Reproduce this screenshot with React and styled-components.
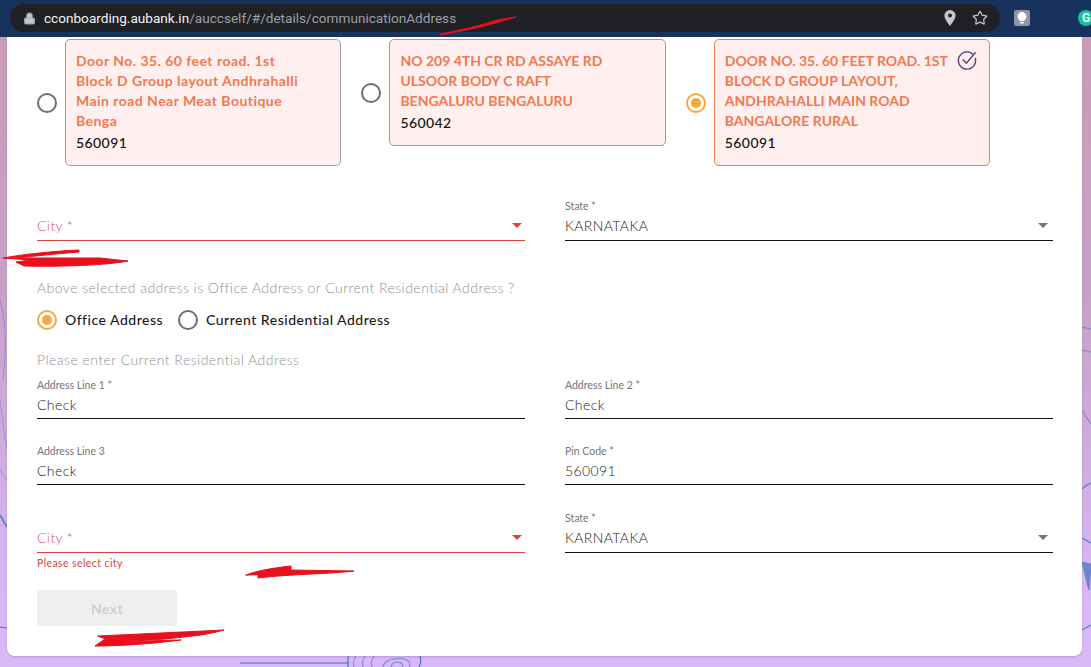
import React from "react";
import styled, { createGlobalStyle } from "styled-components";
import { Lock, Star } from "lucide-react";

const GlobalStyle = createGlobalStyle`
  html, body {
    margin: 0;
    padding: 0;
    background: #d9b8fa;
  }
  * {
    box-sizing: border-box;
  }
`;

const Screen = styled.div`
  position: relative;
  width: 1091px;
  height: 667px;
  overflow: hidden;
  display: flex;
  flex-direction: column;
  font-family: Lato, "Noto Sans", sans-serif;
  background: linear-gradient(180deg, #cc9bb6 0%, #c8a0c8 45%, #d9b8fa 92%);
`;

const BrowserBar = styled.div`
  height: 37px;
  flex-shrink: 0;
  display: flex;
  align-items: flex-start;
  padding-top: 4px;
  padding-left: 10px;
  background: #17325c;
`;

const UrlPill = styled.div`
  flex-shrink: 0;
  width: 990px;
  height: 28px;
  display: flex;
  align-items: center;
  padding: 0 10px 0 13px;
  border-radius: 14px;
  background: #202124;
  font-family: Roboto, sans-serif;
  font-size: 13.6px;
  color: #9aa0a6;
`;

const UrlHost = styled.span`
  color: #f1f3f4;
`;

const UrlText = styled.div`
  flex: 1;
  margin-left: 8px;
  white-space: nowrap;
`;

const PillIcons = styled.div`
  display: flex;
  align-items: center;
  gap: 16px;
  margin-right: 2px;
  color: #c4c7c5;
`;

const ExtensionTile = styled.div`
  flex-shrink: 0;
  width: 16px;
  height: 16px;
  margin-left: 14px;
  margin-top: 6px;
  display: flex;
  align-items: center;
  justify-content: center;
  border-radius: 2px;
  background: #8f97a5;
`;

const GrammarlyDot = styled.div`
  width: 16px;
  height: 16px;
  margin-left: 48px;
  margin-top: 6px;
  flex-shrink: 0;
  display: flex;
  align-items: center;
  justify-content: center;
  border-radius: 50%;
  background: #15c39a;
  color: #fff;
  font-family: Roboto, sans-serif;
  font-size: 12px;
  font-weight: 700;
`;

const Backdrop = styled.svg`
  position: absolute;
  left: 0;
  top: 0;
`;

const Card = styled.main`
  position: relative;
  width: 1075px;
  height: 619px;
  margin-left: 7px;
  padding: 2px 29px 30px 30px;
  background: #fff;
  border-radius: 0 0 8px 8px;
  box-shadow: 0 1px 2px rgba(90, 60, 120, 0.25);
`;

const AddressList = styled.div`
  display: flex;
  align-items: flex-start;
  gap: 20px;
`;

const AddressItem = styled.div`
  display: flex;
  align-items: center;
  gap: 8px;
`;

const Radio = styled.span`
  flex-shrink: 0;
  width: 20px;
  height: 20px;
  display: flex;
  align-items: center;
  justify-content: center;
  border-radius: 50%;
  border: 2px solid ${(p) => (p.$checked ? "#f9a63c" : "#6f6f6f")};
  &::after {
    content: "";
    width: 10px;
    height: 10px;
    border-radius: 50%;
    background: ${(p) => (p.$checked ? "#f9a63c" : "transparent")};
  }
`;

const AddressCard = styled.div`
  position: relative;
  width: 276.4px;
  padding: 11px 10px 11px 10px;
  background: #fff0ef;
  border: 1px solid ${(p) => (p.$selected ? "#e8804f" : "#a39a9c")};
  border-radius: 5px;
`;

const AddressLine = styled.div`
  font-size: 14px;
  line-height: 20px;
  font-weight: 700;
  white-space: nowrap;
  letter-spacing: ${(p) => (p.$caps ? "0" : "0.46px")};
  color: #f0794f;
`;

const Pin = styled.div`
  padding-top: 1px;
  font-size: 14px;
  line-height: 22px;
  font-weight: 500;
  letter-spacing: 0.42px;
  color: #111;
`;

const CheckMark = styled.svg`
  position: absolute;
  right: 12px;
  top: 10px;
`;

const FieldRow = styled.div`
  display: grid;
  grid-template-columns: 488px 488px;
  column-gap: 40px;
  margin-top: ${(p) => p.$top}px;
`;

const Field = styled.div`
  display: flex;
  flex-direction: column;
  justify-content: flex-end;
  height: ${(p) => (p.$select ? 42 : 41)}px;
`;

const FieldLabel = styled.label`
  height: 14px;
  font-size: 10.5px;
  line-height: 14px;
  color: #757575;
`;

const FieldValue = styled.div`
  display: flex;
  align-items: center;
  justify-content: space-between;
  height: ${(p) => (p.$select ? 28 : 27)}px;
  padding-right: 3px;
  padding-bottom: 2px;
  border-bottom: 1px solid ${(p) => (p.$error ? "#e0403a" : "#111")};
  font-size: 14px;
  font-weight: 300;
  letter-spacing: 0.4px;
  color: ${(p) => (p.$error ? "#e35d5b" : "#222")};
`;

const Arrow = styled.span`
  width: 0;
  height: 0;
  margin-right: ${(p) => (p.$error ? 0 : 2)}px;
  border-left: 5px solid transparent;
  border-right: 5px solid transparent;
  border-top: 5px solid ${(p) => (p.$error ? "#e0403a" : "#757575")};
`;

const Prompt = styled.div`
  margin-top: ${(p) => p.$top}px;
  font-size: 14px;
  line-height: 20px;
  font-weight: 300;
  letter-spacing: 0.46px;
  color: #8f8f8f;
`;

const RadioGroup = styled.div`
  display: flex;
  align-items: center;
  gap: 15px;
  margin-top: 12px;
`;

const RadioOption = styled.div`
  display: flex;
  align-items: center;
  gap: 8px;
  font-size: 14px;
  line-height: 20px;
  letter-spacing: 0.5px;
  font-weight: 500;
  color: #1b1b1b;
`;

const HelperText = styled.div`
  margin-top: 3px;
  height: 14px;
  font-size: 10.5px;
  line-height: 14px;
  letter-spacing: 0.4px;
  color: #d9423d;
`;

const NextButton = styled.button`
  display: block;
  width: 140px;
  height: 36px;
  margin-top: 20px;
  padding: 0;
  border: 0;
  border-radius: 3px;
  background: #efefef;
  font-family: inherit;
  font-size: 14px;
  font-weight: 700;
  letter-spacing: 0.4px;
  color: #cfcfcf;
`;

const Scribbles = styled.svg`
  position: absolute;
  left: 0;
  top: 0;
  pointer-events: none;
`;

const addresses = [
  {
    id: 1,
    lines: [
      "Door No. 35. 60 feet road. 1st",
      "Block D Group layout Andhrahalli",
      "Main road Near Meat Boutique",
      "Benga",
    ],
    pin: "560091",
  },
  {
    id: 2,
    caps: true,
    lines: ["NO 209 4TH CR RD ASSAYE RD", "ULSOOR BODY C RAFT", "BENGALURU BENGALURU"],
    pin: "560042",
  },
  {
    id: 3,
    caps: true,
    lines: [
      "DOOR NO. 35. 60 FEET ROAD. 1ST",
      "BLOCK D GROUP LAYOUT,",
      "ANDHRAHALLI MAIN ROAD",
      "BANGALORE RURAL",
    ],
    pin: "560091",
    selected: true,
  },
];

const TextField = ({ label, value }) => (
  <Field>
    <FieldLabel>{label}</FieldLabel>
    <FieldValue>{value}</FieldValue>
  </Field>
);

const CitySelect = () => (
  <Field $select>
    <FieldValue $select $error>
      City *
      <Arrow $error />
    </FieldValue>
  </Field>
);

const StateSelect = () => (
  <Field $select>
    <FieldLabel>State *</FieldLabel>
    <FieldValue $select>
      KARNATAKA
      <Arrow />
    </FieldValue>
  </Field>
);

const App = () => {
  return (
    <Screen>
      <GlobalStyle />
      <Backdrop width="1091" height="667" viewBox="0 0 1091 667" fill="none">
        <g stroke="#3f74c0" strokeWidth="1.2">
          <path d="M240 663 H348" />
          <path d="M348 656 V667 M420 656 C421 660 421 664 419 667" />
          <path d="M356 656 C353 660 353 664 354 667 M365 656 C362 660 362 664 363 667 M374 656 C371 660 371 664 372 667" opacity="0.6" />
          <path d="M383 667 C384 658 404 656 409 662 C411 665 410 666 409 667 M391 667 C392 661 402 660 403 667" opacity="0.6" />
          <path d="M1082 327 L1091 329 M1082 350 L1091 352 M1082 410 C1085 415 1088 420 1091 424" opacity="0.6" />
          <path d="M1082 489 C1085 486 1088 484 1091 483 M1082 538 L1091 543 M1082 630 L1091 625" opacity="0.85" />
          <path d="M1082 562 L1091 564 L1089 590 Z" fill="#3f74c0" opacity="0.7" />
          <path d="M0 627 L7 628" />
          <path d="M0 515 L7 527" strokeWidth="2" opacity="0.7" />
          <path d="M0 300 C6 320 7 350 3 380 M0 400 C3 420 5 440 7 450 M0 470 L7 480" opacity="0.3" />
        </g>
      </Backdrop>

      <BrowserBar>
        <UrlPill>
          <Lock size={13} fill="#c4c7c5" strokeWidth={2} />
          <UrlText>
            <UrlHost>cconboarding.aubank.in</UrlHost>/auccself/#/details/communicationAddress
          </UrlText>
          <PillIcons>
            <svg width="12" height="16" viewBox="0 0 12 16">
              <path
                fillRule="evenodd"
                fill="#c4c7c5"
                d="M6 0 A5.6 5.6 0 0 0 .4 5.6 C.4 9.4 6 16 6 16 S11.6 9.4 11.6 5.6 A5.6 5.6 0 0 0 6 0 Z M6 3.6 A2 2 0 1 1 6 7.6 A2 2 0 1 1 6 3.6 Z"
              />
            </svg>
            <Star size={16} strokeWidth={1.8} />
          </PillIcons>
        </UrlPill>
        <ExtensionTile>
          <svg width="10" height="12" viewBox="0 0 10 12" fill="#fff">
            <path d="M5 0 A4.6 4.6 0 0 0 2.6 8.4 V9 H7.4 V8.4 A4.6 4.6 0 0 0 5 0 Z" />
            <rect x="3" y="10" width="4" height="1.4" />
          </svg>
        </ExtensionTile>
        <GrammarlyDot>G</GrammarlyDot>
      </BrowserBar>

      <Card>
        <AddressList>
          {addresses.map((a) => (
            <AddressItem key={a.id}>
              <Radio $checked={a.selected} />
              <AddressCard $selected={a.selected}>
                {a.lines.map((line) => (
                  <AddressLine key={line} $caps={a.caps}>
                    {line}
                  </AddressLine>
                ))}
                <Pin>{a.pin}</Pin>
                {a.selected && (
                  <CheckMark width="20" height="20" viewBox="0 0 20 20" fill="none" stroke="#5b3a7d" strokeWidth="1.4">
                    <path d="M15.8 4.2 A8.6 8.6 0 1 0 18.2 8" />
                    <path d="M5.8 9.6 L9.4 13.2 L18.6 2.2" />
                  </CheckMark>
                )}
              </AddressCard>
            </AddressItem>
          ))}
        </AddressList>

        <FieldRow $top={33}>
          <CitySelect />
          <StateSelect />
        </FieldRow>

        <Prompt $top={37}>Above selected address is Office Address or Current Residential Address ?</Prompt>
        <RadioGroup>
          <RadioOption>
            <Radio $checked />
            Office Address
          </RadioOption>
          <RadioOption>
            <Radio />
            Current Residential Address
          </RadioOption>
        </RadioGroup>

        <Prompt $top={20}>Please enter Current Residential Address</Prompt>
        <FieldRow $top={8}>
          <TextField label="Address Line 1 *" value="Check" />
          <TextField label="Address Line 2 *" value="Check" />
        </FieldRow>
        <FieldRow $top={25}>
          <TextField label="Address Line 3" value="Check" />
          <TextField label="Pin Code *" value="560091" />
        </FieldRow>
        <FieldRow $top={26}>
          <CitySelect />
          <StateSelect />
        </FieldRow>
        <HelperText>Please select city</HelperText>
        <NextButton disabled>Next</NextButton>
      </Card>

      <Scribbles width="1091" height="667" viewBox="0 0 1091 667" fill="#e8101c" stroke="#e8101c" strokeLinecap="round" strokeLinejoin="round" strokeWidth="1">
        <path d="M441 34 C460 30 480 26 497 20 L516 17 C500 22 480 28 441 35 Z" />
        <path d="M3 258 C25 254 55 251 79 250 L79 252 C55 254 35 256 16 258 L100 258 L128 261 C110 265 60 267 24 266 L16 262 L30 260 Z" />
        <path d="M246 575 C256 571 272 568 291 566 L291 570 L354 571 C330 574 290 574 258 578 L258 575 Z" />
        <path d="M98 636 L224 630 C210 634 195 636 184 637 C160 640 130 641 105 642 L181 640 C150 644 120 646 95 646 L105 639 Z" />
      </Scribbles>
    </Screen>
  );
};

export default App;
